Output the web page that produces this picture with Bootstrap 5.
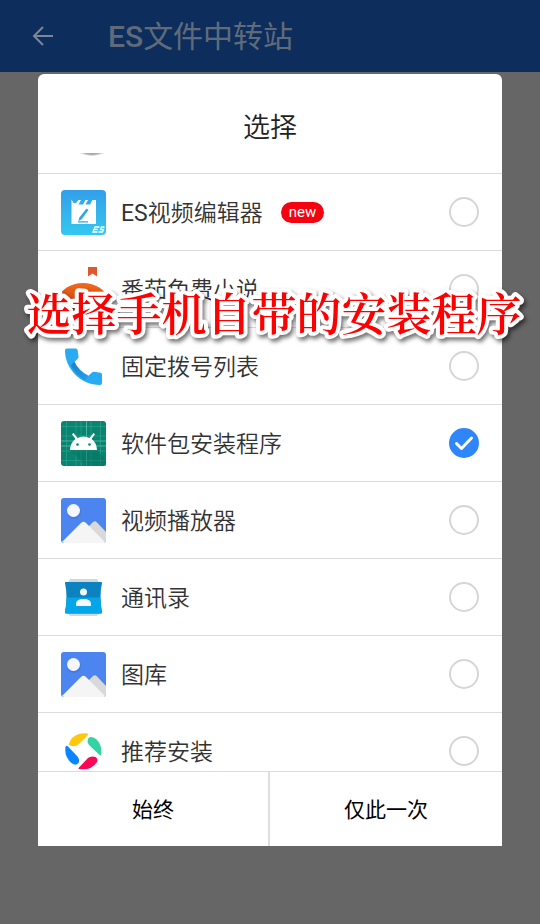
<!DOCTYPE html>
<html lang="zh-CN">
<head>
<meta charset="utf-8">
<meta name="viewport" content="width=device-width, initial-scale=1">
<title>ES文件中转站</title>
<link href="https://cdn.jsdelivr.net/npm/bootstrap@5.3.0/dist/css/bootstrap.min.css" rel="stylesheet">
<style>
  body { background: #666; font-family: Roboto, "Noto Sans CJK SC", sans-serif; color: #333; }
  .app-bar { background: #0d2e5d; color: #606b7a; height: 72px; padding: 0 32px; gap: 54px; }
  .app-bar h1 { font-size: 30px; line-height: 40px; font-weight: 400; padding-top: 2px; }
  .app-bar h1 span { font-weight: 500; }
  .back-btn { line-height: 0; color: #7b8796; }
  .picker { margin: 2px 38px 0; border-radius: 6px 6px 0 0; }
  .picker-title { font-size: 27px; line-height: 40px; font-weight: 350; padding: 34px 0 5px; color: #222; }
  .app-list { height: 618px; scrollbar-width: none; }
  .app-row { height: 77px; padding: 0 23px; gap: 15px; border-bottom: 1px solid #dcdcdc; font-size: 23px; line-height: 32px; font-weight: 350; cursor: pointer; }
  .app-row:last-child { border-bottom-color: transparent; }
  .app-row svg { width: 45px; height: 45px; }
  .app-name { padding-top: 4px; }
  .app-latin { font-weight: 400; }
  .app-peek { height: 21px; padding: 0 23px; border-bottom: 1px solid #dcdcdc; }
  .app-peek svg { width: 60px; height: 8px; }
  .new-tag { background: #f40310; color: #fff; font-size: 15px; line-height: 21px; font-weight: 400; padding: 0 8px; margin-left: 3px; }
  .app-row .form-check-input { width: 30px; height: 30px; border: 2px solid #d6d6d6; box-shadow: none; background-color: #fff; }
  .app-row .form-check-input:checked { border-color: #2f86fb; background-color: #2f86fb; background-size: 30px 30px;
    background-image: url("data:image/svg+xml,%3Csvg xmlns='http://www.w3.org/2000/svg' viewBox='0 0 30 30'%3E%3Cpath d='M7.5 15.5l5 5L22.5 10' fill='none' stroke='%23fff' stroke-width='3' stroke-linecap='round' stroke-linejoin='round'/%3E%3C/svg%3E"); background-position: center; }
  .picker-actions { border-top: 1px solid #dcdcdc; }
  .picker-actions .btn { height: 74px; font-size: 21px; color: #000; border: 0; border-radius: 0; padding: 8px 0 4px; }
  .picker-actions .btn:first-child { border-right: 2px solid #dedede; }
  .caption-note { top: 273px; left: 8px; right: 0; width: calc(100% - 8px); height: 84px; pointer-events: none; filter: drop-shadow(2px 3px 2px rgba(0,0,0,.55)); }
  .caption-note text { font-family: "Noto Serif CJK SC", "Noto Sans CJK SC", serif; font-size: 45px; font-weight: 600; fill: #f00; stroke: #fff; stroke-width: 8px; stroke-linejoin: round; paint-order: stroke; }
</style>
<script src="https://cdn.jsdelivr.net/npm/bootstrap@5.3.0/dist/js/bootstrap.bundle.min.js"></script>
</head>
<body class="min-vh-100 position-relative">
<svg width="0" height="0" class="position-absolute" aria-hidden="true">
  <defs>
    <linearGradient id="sky" x2="0" y2="1"><stop stop-color="#329fe9"/><stop offset="1" stop-color="#34c8f0"/></linearGradient>
    <linearGradient id="tomato" x2="0" y2="1"><stop stop-color="#f26a1c"/><stop offset="1" stop-color="#c8380c"/></linearGradient>
    <linearGradient id="phone" x2="1" y2="1"><stop stop-color="#1780c8"/><stop offset="1" stop-color="#249fec"/></linearGradient>
    <symbol id="photo" viewBox="0 0 45 45">
      <rect width="45" height="45" rx="3" fill="#4c85ef"/>
      <circle cx="13" cy="14" r="7" fill="#3d70d0" opacity=".5"/><circle cx="12.500" cy="12.500" r="6.500" fill="#f5f7fa"/>
      <path d="M24 32L32 24Q34 22.500 36 24.500L45 34V42Q45 45 42 45H30z" fill="#d9d9d9"/>
      <path d="M1 44L20 25Q22.500 22.500 25 25L44 44Q43 45 42 45H3z" fill="#f5f5f5"/>
    </symbol>
  </defs>
</svg>

<header class="app-bar d-flex align-items-center">
  <button type="button" class="back-btn btn p-0 border-0" aria-label="返回">
    <svg width="22" height="20" viewBox="0 0 22 20" fill="none" stroke="currentColor" stroke-width="2"><path d="M21 10H2M11 1L2 10l9 9"/></svg>
  </button>
  <h1 class="m-0"><span>ES</span>文件中转站</h1>
</header>

<main class="picker bg-white overflow-hidden">
  <h2 class="picker-title text-center m-0">选择</h2>
  <form>
    <div class="app-list overflow-auto">
      <div class="app-peek d-flex align-items-start">
        <svg viewBox="0 0 60 8"><path d="M18 0H44Q31 6 18 0z" fill="#ddd"/><path d="M22 0H40Q31 4 22 0z" fill="#aaa"/></svg>
      </div>
      <label class="app-row d-flex align-items-center">
        <svg viewBox="0 0 45 45"><rect width="45" height="45" rx="4" fill="url(#sky)"/><path d="M10.500 16h24.500v18H10.500z" fill="#fff"/><path d="M10.500 16V9.500l2 3.500h2.500L17.500 10h2.500L17.500 14.500h4.500L24.500 10H27L24.500 14.500H29L31.500 10H35v6z" fill="#fff"/><path d="M25.500 18.500l2 1.500-7 9.500-3 1.500.7-3.200z" fill="#2da9e9"/><path d="M17 31.800h10" stroke="#2da9e9" stroke-width="1.300"/><path d="M38.500 37H34l-2 5h4.500M33.500 39.500H37M43.500 37h-3l-1 2.500h3l-1 2.500h-4" fill="none" stroke="#fff" stroke-width="1.300"/></svg>
        <span class="app-name"><span class="app-latin">ES</span>视频编辑器</span><span class="new-tag rounded-pill">new</span>
        <input class="form-check-input m-0 ms-auto flex-shrink-0" type="radio" name="app">
      </label>
      <label class="app-row d-flex align-items-center">
        <svg viewBox="0 0 45 45"><path d="M27 0h9v9.500l-4.500-3-4.500 3z" fill="#e1582f"/><ellipse cx="22" cy="31" rx="23" ry="15" fill="url(#tomato)"/><path d="M17 29l-3-2 4-1 1 3z" fill="#fff"/></svg>
        <span class="app-name">番茄免费小说</span>
        <input class="form-check-input m-0 ms-auto flex-shrink-0" type="radio" name="app">
      </label>
      <label class="app-row d-flex align-items-center">
        <svg viewBox="0 0 45 45"><path d="M6 4.500h8.500q2 0 2.200 2l.8 6q.2 1.300-.8 2.200L12 19.500Q17 28 26 33l5-4.500q1-.9 2.300-.7l6.200 1q1.500.2 1.500 1.700v8.500q0 2-2 2C20 41 4 25 4 6.500q0-2 2-2z" fill="#29abf3"/><path d="M9.800 21.500l3.500-4Q18 27 27.500 31.800L24 36.500Q15 31 9.800 21.500z" fill="url(#phone)"/></svg>
        <span class="app-name">固定拨号列表</span>
        <input class="form-check-input m-0 ms-auto flex-shrink-0" type="radio" name="app">
      </label>
      <label class="app-row d-flex align-items-center">
        <svg viewBox="0 0 45 45"><rect width="45" height="45" rx="3" fill="#078571"/><path d="M5.500 0v45M15 0v45M20 0v45M30 0v45M39.500 0v45M0 5.500h45M0 15h45M0 30h45M0 39.500h45" stroke="#39a292" stroke-width=".6"/><path d="M25.500 0v45M0 20h45M0 25h45" stroke="#62bcae" stroke-width=".8"/><path d="M9 29h27l9 10v6H25z" fill="#05715f" opacity=".5"/><path d="M9 29Q9.500 21.500 14.500 18L11 13.200l1.500-1.200 4 5Q22.500 14 28.500 17l4-5 1.500 1.200L30.500 18q5 3.500 5.500 11z" fill="#fff"/><circle cx="16.500" cy="23.500" r="1.300" fill="#078571"/><circle cx="28.500" cy="23.500" r="1.300" fill="#078571"/></svg>
        <span class="app-name">软件包安装程序</span>
        <input class="form-check-input m-0 ms-auto flex-shrink-0" type="radio" name="app" checked>
      </label>
      <label class="app-row d-flex align-items-center">
        <svg><use href="#photo"/></svg>
        <span class="app-name">视频播放器</span>
        <input class="form-check-input m-0 ms-auto flex-shrink-0" type="radio" name="app">
      </label>
      <label class="app-row d-flex align-items-center">
        <svg viewBox="0 0 45 45"><path d="M9 4h27l3 5H6zM6 37h33l-3 4H9z" fill="#cfd8dc"/><path d="M4.500 7h36q.5 0 .5 1Q38 22 41 37q0 1.500-1.500 1.500h-34Q4 38.500 4 37 7 22 4 8q0-1 .5-1z" fill="#0c82c1"/><path d="M5.700 22.500h33.600Q39.300 30 41 37q0 1.500-1.500 1.500h-34Q4 38.500 4 37q1.700-7 1.700-14.500z" fill="#04a6ea"/><circle cx="22.500" cy="17" r="3.500" fill="#f5f9fb"/><path d="M15 31v-2q0-5 7.500-5t7.500 5v2z" fill="#f5f9fb"/></svg>
        <span class="app-name">通讯录</span>
        <input class="form-check-input m-0 ms-auto flex-shrink-0" type="radio" name="app">
      </label>
      <label class="app-row d-flex align-items-center">
        <svg><use href="#photo"/></svg>
        <span class="app-name">图库</span>
        <input class="form-check-input m-0 ms-auto flex-shrink-0" type="radio" name="app">
      </label>
      <label class="app-row d-flex align-items-center">
        <svg viewBox="0 0 45 45"><path d="M9 16.500Q7 17 9 12 14.500 3 26.500 4.500q1.500.5 0 2l-8 8q-3 4-9.500 2z" fill="#ffc80a"/><path d="M28 8.500q3-1.500 7 1.500 5.500 5 5.500 13-.2 4.500-2 3L28 16q-3-4 0-7.500z" fill="#34d3a3"/><path d="M4.500 18q1-2 2.500-.5l9.500 10Q19 31 17.500 34q-2.500 3-6.500.5Q3 28 4.500 18z" fill="#0a84ff"/><path d="M18 40q-1-.5 0-1.500l9-9.500q3-2.500 7.500-1 3 2 1.500 5Q30 42 18 40z" fill="#fa0757"/></svg>
        <span class="app-name">推荐安装</span>
        <input class="form-check-input m-0 ms-auto flex-shrink-0" type="radio" name="app">
      </label>
    </div>
    <div class="picker-actions d-flex">
      <button type="button" class="btn w-50">始终</button>
      <button type="button" class="btn w-50">仅此一次</button>
    </div>
  </form>
</main>

<svg class="caption-note position-absolute"><text x="50%" y="58" text-anchor="middle">选择手机自带的安装程序</text></svg>
</body>
</html>
